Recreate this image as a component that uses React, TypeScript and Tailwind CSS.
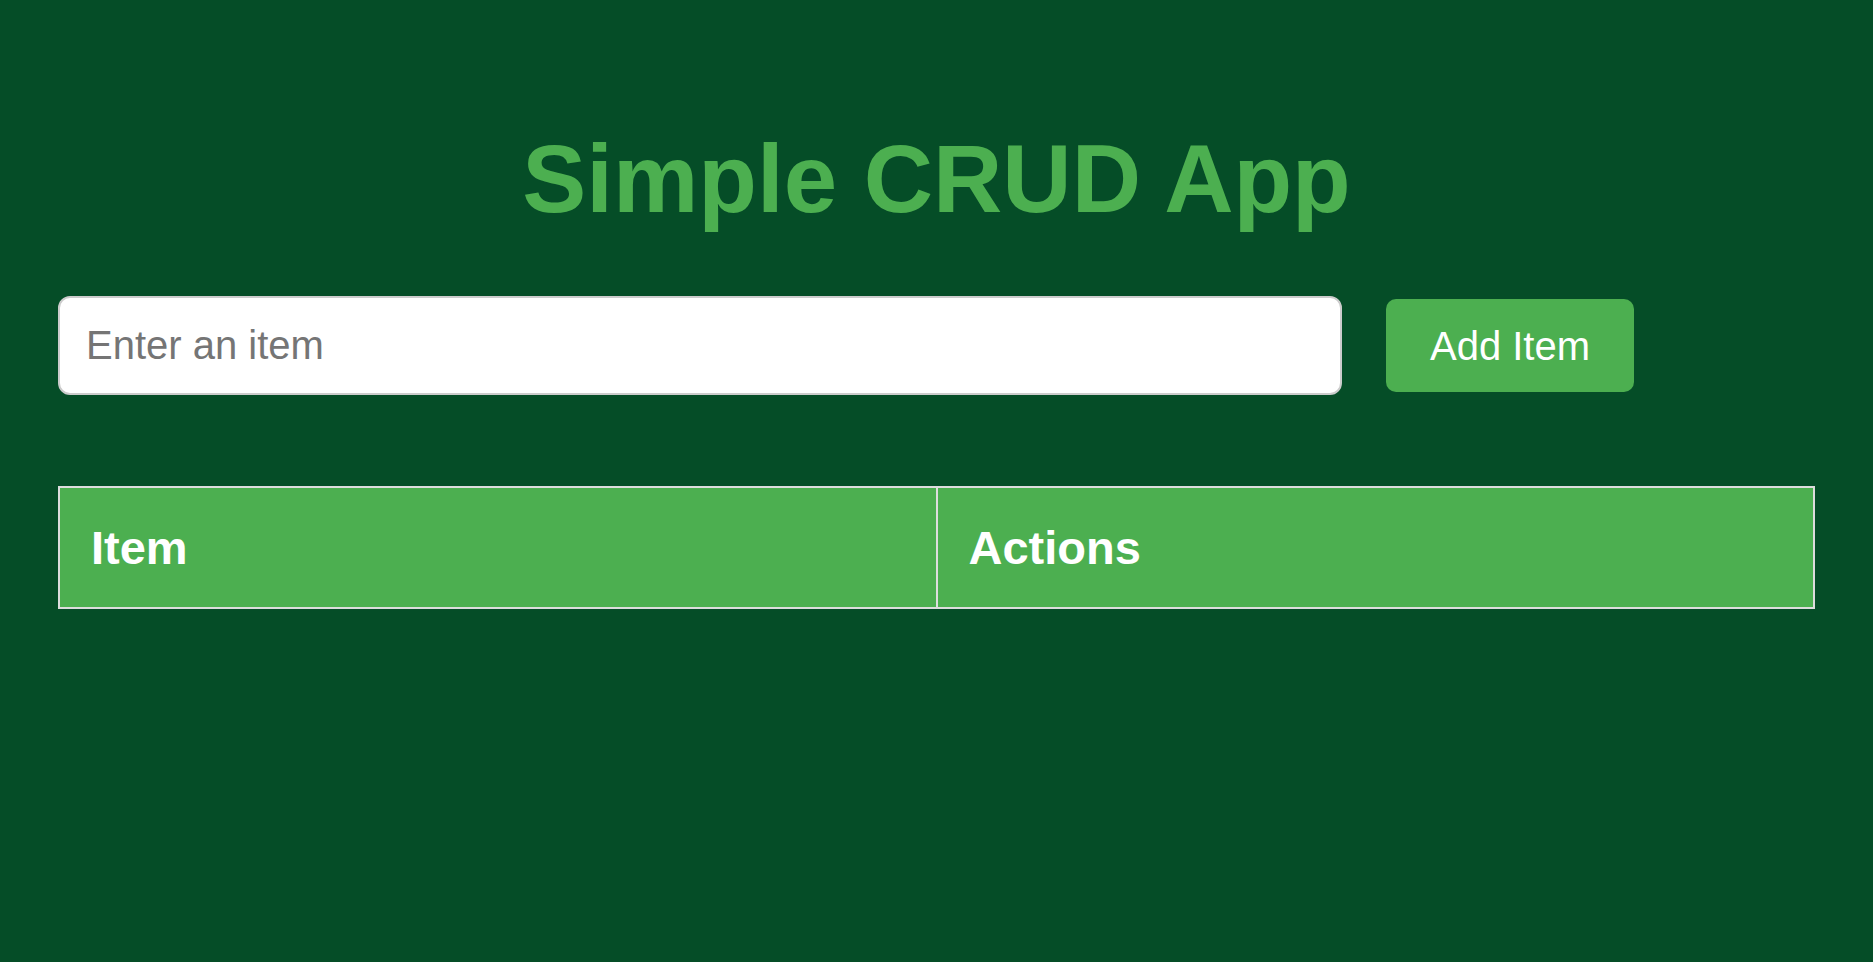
import React from "react";

export default function App() {
  return (
    <div
      className="min-h-[962px] w-full bg-[#054d27] px-[58px] pt-[124px]"
      style={{ fontFamily: '"Liberation Sans", Arial, sans-serif' }}
    >
      <h1 className="m-0 text-center text-[96px] font-bold leading-[110px] text-[#4caf50]">
        Simple CRUD App
      </h1>
      <div className="mt-[62px] flex items-center gap-[44px]">
        <input
          type="text"
          placeholder="Enter an item"
          className="box-border h-[99px] w-[1284px] rounded-[12px] border-2 border-[#cccccc] bg-white px-[26px] text-[40px] text-[#333] outline-none placeholder:text-[#757575]"
        />
        <button className="h-[93px] w-[248px] rounded-[10px] bg-[#4caf50] text-[40px] leading-[46px] text-white">
          Add Item
        </button>
      </div>
      <table className="mt-[91px] w-full table-fixed border-collapse">
        <thead>
          <tr>
            <th className="w-1/2 border-2 border-[#dddddd] bg-[#4caf50] px-[31px] py-[32px] text-left text-[47px] font-bold leading-[55px] text-white">
              Item
            </th>
            <th className="w-1/2 border-2 border-[#dddddd] bg-[#4caf50] px-[31px] py-[32px] text-left text-[47px] font-bold leading-[55px] text-white">
              Actions
            </th>
          </tr>
        </thead>
        <tbody></tbody>
      </table>
    </div>
  );
}
